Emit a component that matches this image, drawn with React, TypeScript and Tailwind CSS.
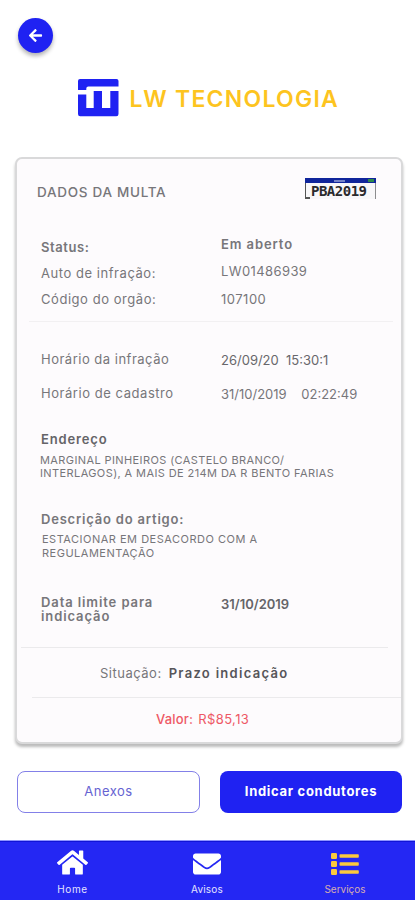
import { FaArrowLeft, FaEnvelope, FaHome } from 'react-icons/fa';

type FieldProps = {
    label: string;
    value: string;
    className: string;
    labelClass: string;
    valueClass: string;
}

const Field = (props: FieldProps) => {
    return (
        <div className={`flex items-start whitespace-pre leading-4 ${props.className}`}>
            <span className={`w-[180px] shrink-0 ${props.labelClass}`}>{props.label}</span>
            <span className={props.valueClass}>{props.value}</span>
        </div>
    )
}

const Logo = () => {
    return (
        <svg width="41" height="38" viewBox="0 0 41 38" fill="#1f22f2">
            <path d="M2 0H38.5Q40.5 0 40.5 2V7.5H10.3Q8.3 7.5 8.3 9.5V11H0V2Q0 0 2 0Z" />
            <path d="M0 15.5H8.3V29H15.7V12H24V29H32.3V12H40.5V35Q40.5 37.2 38.3 37.2H2.2Q0 37.2 0 35Z" />
        </svg>
    )
}

const Plate = () => {
    return (
        <div className="flex h-[21px] w-[71px] flex-col border-r border-r-[#8c8c8e] bg-[#f8f7f9]">
            <div className="-mr-px flex h-[5px] shrink-0 items-center justify-between bg-[#10259b] pl-[29px] pr-0.5">
                <span className="h-[2px] w-[11px] bg-[#7583c9]"></span>
                <span className="h-[3px] w-1.5 bg-[#2d8a4b]"></span>
            </div>
            <div className="flex h-[16px] items-center">
                <span className="h-[16px] w-[5px] shrink-0 border-b-2 border-l border-[#555]"></span>
                <span className="ml-[1px] font-['DejaVu_Sans_Mono',monospace] text-[14px] font-bold leading-[16px] tracking-[-0.5px] text-[#2a2a2c]">PBA2019</span>
            </div>
        </div>
    )
}

const ListIcon = () => {
    return (
        <svg width="28" height="24" viewBox="0 0 28 24" fill="#fbc93d">
            <rect x="0" y="1" width="6" height="6" rx="1.2" />
            <rect x="0" y="9" width="6" height="6" rx="1.2" />
            <rect x="0" y="17" width="6" height="6" rx="1.2" />
            <rect x="8.5" y="2.3" width="19.3" height="3.4" rx="0.8" />
            <rect x="8.5" y="10.3" width="19.3" height="3.4" rx="0.8" />
            <rect x="8.5" y="18.3" width="19.3" height="3.4" rx="0.8" />
        </svg>
    )
}

const App = () => {
    return (
        <div className="flex h-[900px] w-[415px] flex-col overflow-hidden bg-white font-['Inter',sans-serif] text-[13px] text-[#77767a]">
            <header className="h-[157px] shrink-0">
                <button className="ml-[18px] mt-[18px] flex h-[35px] w-[35px] items-center justify-center rounded-full bg-[#1f22f2] text-white shadow-[0_3px_4px_rgba(0,0,0,0.3)]">
                    <FaArrowLeft size={15} />
                </button>
                <div className="ml-[77.5px] mt-[26px] flex items-center">
                    <Logo />
                    <span className="ml-[11px] mt-[2px] whitespace-nowrap text-[23px] font-semibold leading-7 tracking-[1.25px] text-[#fdc41f]">LW TECNOLOGIA</span>
                </div>
            </header>

            <main className="ml-[15px] flex h-[587px] w-[388px] shrink-0 flex-col rounded-[7px] border-2 border-[#d9d9da] bg-[#fdfbfd] shadow-[0_3px_3px_rgba(0,0,0,0.27)]">
                <div className="flex h-[77px] shrink-0 items-start justify-between pl-5 pr-[25px] pt-[19px]">
                    <h1 className="mt-[6px] text-[13.5px] font-medium leading-4 tracking-[0.7px]">DADOS DA MULTA</h1>
                    <Plate />
                </div>

                <section className="h-[85px] shrink-0 pl-6">
                    <Field label="Status:" value="Em aberto" className="h-[27px]" labelClass="mt-[3px] font-semibold tracking-[0.6px]" valueClass="font-semibold tracking-[0.9px]" />
                    <Field label="Auto de infração:" value="LW01486939" className="h-[27px]" labelClass="mt-[2px] tracking-[0.55px]" valueClass="tracking-[0.4px]" />
                    <Field label="Código do orgão:" value="107100" className="mt-[1px]" labelClass="tracking-[0.55px]" valueClass="tracking-[0.5px]" />
                </section>
                <div className="ml-3 h-px w-[364px] shrink-0 bg-[#f2f0f2]"></div>

                <section className="h-[325px] shrink-0 pl-6 pt-[29px]">
                    <Field label="Horário da infração" value="26/09/20  15:30:1" className="h-[34px]" labelClass="tracking-[0.5px]" valueClass="mt-px text-[#68676b]" />
                    <Field label="Horário de cadastro" value="31/10/2019    02:22:49" className="h-[46px]" labelClass="tracking-[0.55px]" valueClass="mt-px" />
                    <h2 className="font-semibold leading-4 tracking-[0.85px] text-[#656468]">Endereço</h2>
                    <p className="-ml-px mt-[7px] whitespace-nowrap text-[11px] leading-[13px] tracking-[0.4px]">
                        MARGINAL PINHEIROS (CASTELO BRANCO/<br />
                        INTERLAGOS), A MAIS DE 214M DA R BENTO FARIAS
                    </p>
                    <h2 className="mt-[31px] font-semibold leading-4 tracking-[0.8px]">Descrição do artigo:</h2>
                    <p className="ml-px mt-[5px] whitespace-nowrap text-[11px] leading-[14px] tracking-[0.5px]">
                        ESTACIONAR EM DESACORDO COM A<br />
                        REGULAMENTAÇÃO
                    </p>
                    <div className="mt-[35px] flex font-semibold">
                        <span className="mt-px w-[180px] leading-[13.5px] tracking-[0.9px]">Data limite para<br />indicação</span>
                        <span className="mt-px leading-4 text-[#656468]">31/10/2019</span>
                    </div>
                </section>

                <div className="ml-1 h-px w-[367px] shrink-0 bg-[#ebeaec]"></div>
                <div className="flex h-[49px] shrink-0 items-center whitespace-nowrap pl-[83px] pt-[2px]">
                    <span className="tracking-[0.5px]">Situação:</span>
                    <span className="ml-[7px] font-semibold tracking-[1.3px] text-[#565559]">Prazo indicação</span>
                </div>
                <div className="ml-[15px] h-px shrink-0 bg-[#ebeaec]"></div>
                <div className="flex h-[43px] shrink-0 items-center whitespace-nowrap pl-[139px] pt-px text-[#ee5865]">
                    <span className="font-medium tracking-[0.2px]">Valor:</span>
                    <span className="ml-[5px] tracking-[0.4px]">R$85,13</span>
                </div>
            </main>

            <div className="ml-[17px] mt-[27px] flex h-[42px] shrink-0 gap-5">
                <button className="w-[183px] rounded-lg border border-[#8380e8] text-[13px] tracking-[0.5px] text-[#6663d2]">Anexos</button>
                <button className="w-[182px] rounded-lg bg-[#1f22f2] text-[13px] font-bold tracking-[0.7px] text-white">Indicar condutores</button>
            </div>

            <nav className="mt-auto flex h-[60px] shrink-0 border-t border-[#8f95ff] bg-[#2427f3] text-[10px] leading-3 text-[#e3e3ff] shadow-[inset_0_1px_0_#1114d6]">
                <a className="ml-[42px] flex w-[61px] flex-col items-center pt-[6px]">
                    <FaHome size={31} color="#fff" />
                    <span className="mt-[5px] tracking-[0.6px]">Home</span>
                </a>
                <a className="ml-[74px] flex w-[60px] flex-col items-center pt-[9px]">
                    <FaEnvelope size={28} color="#fff" />
                    <span className="mt-[5px] tracking-[0.2px]">Avisos</span>
                </a>
                <a className="ml-[78px] flex w-[60px] flex-col items-center pt-[11px] text-[#d4adb0]">
                    <ListIcon />
                    <span className="mt-[7px]">Serviços</span>
                </a>
            </nav>
        </div>
    )
}

export default App;
